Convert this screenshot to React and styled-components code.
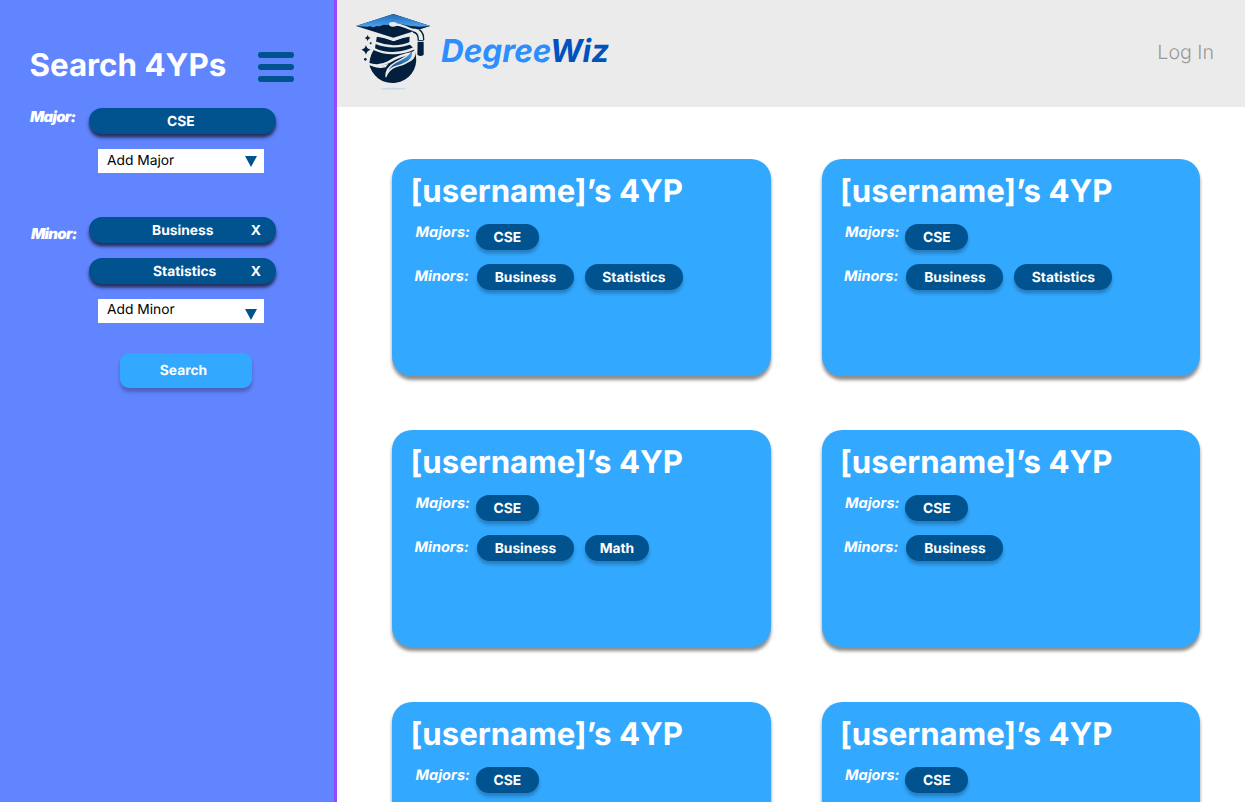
import React from "react";
import styled, { createGlobalStyle } from "styled-components";

const GlobalStyle = createGlobalStyle`
  *, *::before, *::after { box-sizing: border-box; }
  body { margin: 0; background: #fff; overflow: hidden; font-family: Inter, "Liberation Sans", sans-serif; font-optical-sizing: none; text-rendering: geometricPrecision; }
`;

const Page = styled.div`
  display: flex;
  width: 1245px;
  height: 802px;
  overflow: hidden;
`;

const Sidebar = styled.aside`
  flex: none;
  width: 337px;
  height: 802px;
  padding: 45px 0 0 30px;
  background: #6184ff;
  border-right: 3px solid #9747ff;
`;

const SidebarHeader = styled.div`
  display: flex;
  height: 63px;
`;

const SidebarTitle = styled.h1`
  width: 228px;
  margin: 0;
  color: #fff;
  font-size: 31.3px;
  font-weight: 700;
  line-height: 41px;
  text-indent: -0.5px;
  white-space: nowrap;
`;

const MenuButton = styled.div`
  display: flex;
  flex-direction: column;
  gap: 6px;
  width: 36px;
  padding-top: 7px;
`;

const MenuBar = styled.span`
  height: 6px;
  border-radius: 3px;
  background: #00538f;
`;

const Field = styled.div`
  display: flex;
  height: ${(p) => p.$height}px;
`;

const FieldLabel = styled.div`
  width: 59px;
  padding-top: ${(p) => p.$drop}px;
  padding-left: ${(p) => p.$indent || 0}px;
  color: #fff;
  font-size: 15px;
  font-style: italic;
  font-weight: 900;
  letter-spacing: -0.75px;
  line-height: 16px;
`;

const Controls = styled.div`
  display: flex;
  flex-direction: column;
`;

const FilterPill = styled.div`
  display: flex;
  justify-content: space-between;
  width: 187px;
  height: 26px;
  margin-bottom: 15px;
  padding: 0 15px 0 ${(p) => p.$inset}px;
  border-radius: 13px;
  background: #00538f;
  box-shadow: 0 3.5px 3.5px rgba(0, 0, 0, 0.65);
  color: #fff;
  font-size: 13.8px;
  font-weight: 700;
  line-height: 28px;
`;

const Select = styled.div`
  display: flex;
  justify-content: space-between;
  width: 166px;
  height: 24px;
  margin-left: 9px;
  padding: 0 7px 0 9px;
  background: #fff;
  color: #000;
  font-size: 13.8px;
  line-height: ${(p) => p.$line}px;
`;

const Arrow = styled.svg`
  width: 12px;
  height: 11px;
  margin-top: ${(p) => p.$drop}px;
`;

const SearchButton = styled.div`
  width: 132px;
  height: 35px;
  margin-left: 90px;
  padding-right: 5px;
  border-radius: 9px;
  background: #32a8ff;
  box-shadow: 0 3.5px 3.5px rgba(0, 0, 0, 0.25);
  color: #fff;
  font-size: 13.8px;
  font-weight: 700;
  line-height: 36px;
  text-align: center;
`;

const Main = styled.main`
  flex: none;
  width: 908px;
`;

const TopBar = styled.header`
  display: flex;
  height: 107px;
  padding: 5px 31px 0 8px;
  background: #ebebeb;
`;

const LogoMark = styled.svg`
  flex: none;
  width: 100px;
  height: 95px;
`;

const Brand = styled.div`
  flex: 1;
  margin-left: -4px;
  color: #2d8eff;
  font-size: 31.5px;
  font-style: italic;
  font-weight: 700;
  line-height: 92px;
  span { color: #0052bd; }
`;

const LogIn = styled.div`
  color: #999;
  font-size: 19.6px;
  font-weight: 350;
  line-height: 94px;
`;

const CardGrid = styled.section`
  display: grid;
  grid-template-columns: 379px 378.5px;
  grid-template-rows: 271px 272px 217px;
  column-gap: 50.5px;
  padding: 52px 0 0 55px;
`;

const Card = styled.article`
  height: 217px;
  padding: 12px 0 0 19px;
  border-radius: 20px;
  background: #32a8ff;
  box-shadow: 0 3.5px 3.5px rgba(0, 0, 0, 0.45);
`;

const CardTitle = styled.h2`
  height: 53px;
  margin: 0;
  color: #fff;
  font-size: 31.2px;
  font-weight: 700;
  line-height: 41px;
  text-indent: -0.5px;
`;

const TagRow = styled.div`
  display: flex;
  height: 40px;
  padding-left: ${(p) => p.$indent}px;
`;

const TagLabel = styled.div`
  width: ${(p) => p.$width}px;
  padding-top: ${(p) => p.$drop}px;
  color: #fff;
  font-size: 14.5px;
  font-style: italic;
  font-weight: 700;
  line-height: 16px;
`;

const Tag = styled.span`
  width: ${(p) => p.$width}px;
  height: 26px;
  margin-right: 11px;
  border-radius: 13px;
  background: #00538f;
  box-shadow: 0 3.5px 3.5px rgba(0, 0, 0, 0.25);
  color: #fff;
  font-size: 13.8px;
  font-weight: 700;
  line-height: 28px;
  text-align: center;
  text-indent: 0.8px;
`;

const tagWidths = { CSE: 63, Business: 97, Statistics: 98, Math: 64 };

const plans = [
  ["Business", "Statistics"],
  ["Business", "Statistics"],
  ["Business", "Math"],
  ["Business"],
  ["Business"],
  ["Business"],
];

function DropArrow({ drop }) {
  return (
    <Arrow $drop={drop} viewBox="0 0 12 11">
      <path d="M0 0H12L6 11Z" fill="#00538f" />
    </Arrow>
  );
}

function Logo() {
  return (
    <LogoMark viewBox="0 0 300 285">
      <defs>
        <linearGradient id="capTop" x1="0" y1="0" x2="0" y2="1">
          <stop offset="0" stopColor="#2368b4" />
          <stop offset="1" stopColor="#4ba4f5" />
        </linearGradient>
        <linearGradient id="swoosh" x1="0" y1="1" x2="1" y2="0">
          <stop offset="0" stopColor="#0c3c72" />
          <stop offset="1" stopColor="#46a0ee" />
        </linearGradient>
      </defs>
      <path d="M96 92L145 104L194 90L193 118Q212 132 213 154A71 70 0 0 1 72 174Q75 145 90 129Z" fill="#02203e" />
      <path d="M28 63L145 101L261 63L250 84L196 91L147 108L96 92Z" fill="#ebebeb" />
      <g fill="none" stroke="#ebebeb" strokeLinecap="round">
        <path d="M96 93Q122 96 145 106Q168 95 196 92" strokeWidth="5" />
        <path d="M91 113Q118 124 146 124Q175 124 201 112" strokeWidth="7" />
        <path d="M87 132Q115 146 151 144Q182 142 205 131" strokeWidth="7" />
        <path d="M68 176Q101 188 130 172Q163 150 208 144" strokeWidth="7" />
        <path d="M88 128Q73 145 70 176" strokeWidth="5" />
      </g>
      <path d="M121 217Q118 188 151 170Q187 151 211 134Q216 155 198 168Q178 181 153 187Q133 194 124 217Z" fill="#ebebeb" />
      <path d="M131 196Q139 179 164 168Q187 158 201 139Q204 157 188 168Q167 180 148 184Q138 187 131 196Z" fill="url(#swoosh)" />
      <path d="M66 172Q91 192 130 176L122 187Q88 195 66 172Z" fill="#ebebeb" />
      <path d="M33 63L145 27L256 63L145 98Z" fill="#02203e" />
      <path d="M33 63L145 27L256 63L224 65L210 64L192 62L168 57L144 57L126 60L116 59L104 64L95 63L84 67L76 64L66 65Z" fill="url(#capTop)" />
      <path d="M144 58Q164 57 182 66Q200 75 211 75Q231 77 232 104" fill="none" stroke="#ebebeb" strokeWidth="7" />
      <path d="M219 85Q225 91 224 104" fill="none" stroke="#ebebeb" strokeWidth="4" />
      <ellipse cx="144" cy="58" rx="12" ry="7" fill="#ebebeb" />
      <path d="M204 81Q220 83 220 105M223 74Q237 84 236 105" fill="none" stroke="#02203e" strokeWidth="4" />
      <path d="M218 105H236V149Q227 157 217 149Z" fill="#02203e" />
      <path d="M216 109H238" stroke="#ebebeb" strokeWidth="3" />
      <path d="M68 90Q69 97 77 99Q69 101 68 108Q66 101 59 99Q66 97 68 90Z" fill="#02203e" />
      <path d="M63 120Q65 132 77 134Q65 137 63 149Q60 137 49 134Q60 132 63 120Z" fill="#02203e" />
      <circle cx="77" cy="115" r="3" fill="#02203e" />
      <circle cx="61" cy="163" r="4" fill="#02203e" />
      <ellipse cx="145" cy="251" rx="38" ry="3" fill="#c5d9e6" />
    </LogoMark>
  );
}

function PlanCard({ minors }) {
  return (
    <Card>
      <CardTitle>[username]’s 4YP</CardTitle>
      <TagRow $indent={4.5}>
        <TagLabel $width={60} $drop={1}>Majors:</TagLabel>
        <Tag $width={tagWidths.CSE}>CSE</Tag>
      </TagRow>
      <TagRow $indent={3.5}>
        <TagLabel $width={62} $drop={5}>Minors:</TagLabel>
        {minors.map((m) => (
          <Tag key={m} $width={tagWidths[m]}>{m}</Tag>
        ))}
      </TagRow>
    </Card>
  );
}

export default function App() {
  return (
    <>
      <GlobalStyle />
      <Page>
        <Sidebar>
          <SidebarHeader>
            <SidebarTitle>Search 4YPs</SidebarTitle>
            <MenuButton>
              <MenuBar />
              <MenuBar />
              <MenuBar />
            </MenuButton>
          </SidebarHeader>
          <Field $height={109}>
            <FieldLabel $drop={1}>Major:</FieldLabel>
            <Controls>
              <FilterPill $inset={78}>
                <span>CSE</span>
              </FilterPill>
              <Select $line={24}>
                <span>Add Major</span>
                <DropArrow drop={7} />
              </Select>
            </Controls>
          </Field>
          <Field $height={136}>
            <FieldLabel $drop={9} $indent={1}>Minor:</FieldLabel>
            <Controls>
              <FilterPill $inset={63}>
                <span>Business</span>
                <span>X</span>
              </FilterPill>
              <FilterPill $inset={64}>
                <span>Statistics</span>
                <span>X</span>
              </FilterPill>
              <Select $line={23}>
                <span>Add Minor</span>
                <DropArrow drop={10} />
              </Select>
            </Controls>
          </Field>
          <SearchButton>Search</SearchButton>
        </Sidebar>
        <Main>
          <TopBar>
            <Logo />
            <Brand>
              Degree<span>Wiz</span>
            </Brand>
            <LogIn>Log In</LogIn>
          </TopBar>
          <CardGrid>
            {plans.map((minors, i) => (
              <PlanCard key={i} minors={minors} />
            ))}
          </CardGrid>
        </Main>
      </Page>
    </>
  );
}
